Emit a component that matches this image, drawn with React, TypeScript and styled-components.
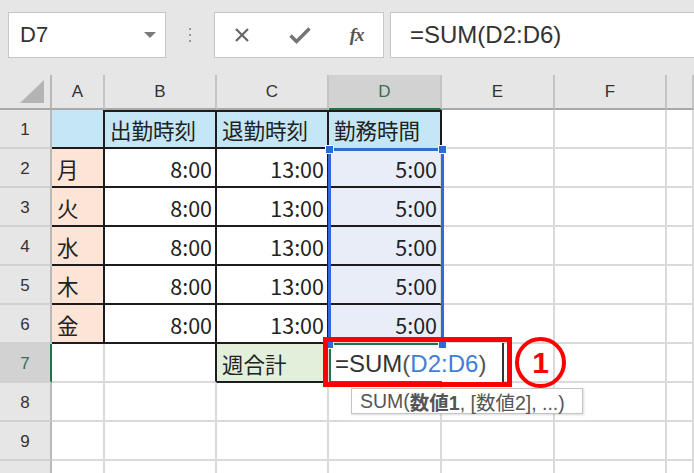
import React from "react";
import styled, { createGlobalStyle } from "styled-components";

const Global = createGlobalStyle`
  html, body { margin: 0; padding: 0; background: #e6e6e6; }
  body { width: 694px; height: 473px; overflow: hidden; font-family: "Liberation Sans", "Noto Sans CJK JP", sans-serif; }
  * { box-sizing: border-box; }
`;

const GRID = "#dadada";
const BLACK = "#1c1c1c";
const GREEN = "#217346";
const BLUE = "#2f6bd6";
const RED = "#ff0000";

const Page = styled.div`
  width: 694px;
  height: 473px;
  overflow: hidden;
  display: flex;
  flex-direction: column;
  background: #e6e6e6;
`;

const Toolbar = styled.div`
  height: 75px;
  flex: none;
  display: flex;
  align-items: flex-start;
  padding: 12px 0 0 8px;
`;

const Box = styled.div`
  height: 46px;
  background: #ffffff;
  border: 1.5px solid #c6c6c6;
  display: flex;
  align-items: center;
`;

const NameBox = styled(Box)`
  width: 158px;
  justify-content: space-between;
  padding: 0 9px 0 11px;
  font-size: 22px;
  color: #333;
`;

const Grip = styled.div`
  width: 48px;
  height: 46px;
  display: flex;
  flex-direction: column;
  align-items: center;
  justify-content: center;
  gap: 4px;
`;

const GripDot = styled.span`
  width: 2px;
  height: 2px;
  background: #9a9a9a;
`;

const ButtonsBox = styled(Box)`
  width: 170px;
  justify-content: space-around;
`;

const FxLabel = styled.span`
  font-family: "Liberation Serif", serif;
  font-style: italic;
  font-weight: bold;
  font-size: 19px;
  color: #555;
  letter-spacing: -1px;
`;

const FormulaInput = styled(Box)`
  flex: 1;
  margin-left: 6px;
  margin-right: -6px;
  padding-left: 19px;
  font-size: 24px;
  color: #333;
`;

const SheetWrap = styled.div`
  position: relative;
  flex: 1;
  overflow: hidden;
`;

const Sheet = styled.div`
  display: grid;
  grid-template-columns: 52px 53px 112px 112px 113px 113px 112px 1fr;
  grid-template-rows: 35px repeat(10, 39px);
  background: #ffffff;
`;

const Corner = styled.div`
  background: #e6e6e6;
  border-right: 2px solid #b8b8b8;
  border-bottom: 2px solid #a8a8a8;
  display: flex;
  align-items: flex-end;
  justify-content: flex-end;
  padding: 0 6px 5px 0;
`;

const ColHeader = styled.div<{ $active?: boolean }>`
  background: ${(p) => (p.$active ? "#d2d2d2" : "#e6e6e6")};
  border-right: 2px solid #c4c4c4;
  border-bottom: 2px solid ${(p) => (p.$active ? GREEN : "#a8a8a8")};
  color: ${(p) => (p.$active ? "#3a6e58" : "#333")};
  font-size: 17px;
  display: flex;
  align-items: center;
  justify-content: center;
  padding-top: 1px;
`;

const RowHeader = styled.div<{ $active?: boolean }>`
  background: ${(p) => (p.$active ? "#d2d2d2" : "#e6e6e6")};
  border-right: 2px solid ${(p) => (p.$active ? GREEN : "#b8b8b8")};
  border-bottom: 2px solid #d0d0d0;
  color: ${(p) => (p.$active ? "#3a6e58" : "#333")};
  font-size: 17px;
  display: flex;
  align-items: center;
  justify-content: center;
  padding-top: 2px;
`;

type CellProps = {
  $fill?: string;
  $align?: "left" | "right";
  $r?: boolean;
  $b?: boolean;
  $t?: boolean;
};

const Cell = styled.div<CellProps>`
  background: ${(p) => p.$fill || "#ffffff"};
  border-right: 2px solid ${(p) => (p.$r ? BLACK : GRID)};
  border-bottom: 2px solid ${(p) => (p.$b ? BLACK : GRID)};
  box-shadow: ${(p) => (p.$t ? `inset 0 2px 0 ${BLACK}` : "none")};
  font-family: "Noto Sans CJK JP", sans-serif;
  font-size: 21.5px;
  line-height: 1;
  color: #222;
  display: flex;
  align-items: center;
  justify-content: ${(p) => (p.$align === "right" ? "flex-end" : "flex-start")};
  padding: 3px 3px 0 5px;
  white-space: nowrap;
`;

const RangeBox = styled.div`
  position: absolute;
  left: 328px;
  top: 73px;
  width: 116px;
  height: 198px;
  border: 3px solid ${BLUE};
`;

const Handle = styled.div<{ $x: number; $y: number }>`
  position: absolute;
  left: ${(p) => p.$x - 4}px;
  top: ${(p) => p.$y - 4}px;
  width: 9px;
  height: 9px;
  background: ${BLUE};
  border: 1px solid #ffffff;
`;

const EditBox = styled.div`
  position: absolute;
  left: 329px;
  top: 268px;
  width: 175px;
  height: 40px;
  background: #ffffff;
  border-right: 2px solid #333;
  display: flex;
  align-items: center;
  padding: 2px 0 0 6px;
  font-size: 24px;
  color: #333;
  white-space: nowrap;
`;

const EditFrame = styled.div`
  position: absolute;
  left: 0;
  top: 0;
  width: 113px;
  height: 40px;
  border: 2px solid ${GREEN};
  border-right: none;
`;

const RefText = styled.span`
  color: #3f7fd8;
`;

const ParenText = styled.span`
  color: #555;
`;

const RedBox = styled.div`
  position: absolute;
  left: 323px;
  top: 262px;
  width: 189px;
  height: 50px;
  border: 5px solid ${RED};
`;

const NumberMark = styled.div`
  position: absolute;
  left: 515px;
  top: 262px;
  width: 51px;
  height: 51px;
  border: 4px solid ${RED};
  border-radius: 50%;
  display: flex;
  align-items: center;
  justify-content: center;
  color: ${RED};
  font-size: 30px;
  font-weight: bold;
  font-family: "Liberation Sans", sans-serif;
  padding-top: 1px;
`;

const Tooltip = styled.div`
  position: absolute;
  left: 351px;
  top: 313px;
  width: 232px;
  height: 26px;
  background: #ffffff;
  border: 1px solid #c4c4c4;
  box-shadow: 1px 1px 2px rgba(0, 0, 0, 0.15);
  display: flex;
  align-items: center;
  padding-left: 8px;
  font-size: 19.5px;
  color: #555;
  white-space: nowrap;
  font-family: "Liberation Sans", "Noto Sans CJK JP", sans-serif;
`;

const Strong = styled.b`
  font-weight: bold;
`;

const cols = ["A", "B", "C", "D", "E", "F", ""];
const days = ["月", "火", "水", "木", "金"];

export default function App() {
  const rows: React.ReactNode[] = [];

  rows.push(
    <RowHeader key="h1">1</RowHeader>,
    <Cell key="a1" $fill="#c4e6f5" $r $b />,
    <Cell key="b1" $fill="#c4e6f5" $r $b $t>出勤時刻</Cell>,
    <Cell key="c1" $fill="#c4e6f5" $r $b $t>退勤時刻</Cell>,
    <Cell key="d1" $fill="#c4e6f5" $r $t>勤務時間</Cell>,
    <Cell key="e1" />,
    <Cell key="f1" />,
    <Cell key="g1" />
  );

  days.forEach((d, i) => {
    const n = i + 2;
    rows.push(
      <RowHeader key={`h${n}`}>{n}</RowHeader>,
      <Cell key={`a${n}`} $fill="#fce4d6" $r $b>{d}</Cell>,
      <Cell key={`b${n}`} $align="right" $r $b>8:00</Cell>,
      <Cell key={`c${n}`} $align="right" $r $b>13:00</Cell>,
      <Cell key={`d${n}`} $fill="#e9edf7" $align="right" $b={n < 6}>5:00</Cell>,
      <Cell key={`e${n}`} />,
      <Cell key={`f${n}`} />,
      <Cell key={`g${n}`} />
    );
  });

  rows.push(
    <RowHeader key="h7" $active>7</RowHeader>,
    <Cell key="a7" />,
    <Cell key="b7" $r />,
    <Cell key="c7" $fill="#e2efda" $b>週合計</Cell>,
    <Cell key="d7" />,
    <Cell key="e7" />,
    <Cell key="f7" />,
    <Cell key="g7" />
  );

  [8, 9, 10].forEach((n) => {
    rows.push(<RowHeader key={`h${n}`}>{n < 10 ? n : ""}</RowHeader>);
    for (let c = 0; c < 7; c++) rows.push(<Cell key={`r${n}c${c}`} />);
  });

  return (
    <>
      <Global />
      <Page>
        <Toolbar>
          <NameBox>
            <span>D7</span>
            <svg width="12" height="7" viewBox="0 0 12 7">
              <path d="M0 0 L12 0 L6 6 Z" fill="#7a7a7a" />
            </svg>
          </NameBox>
          <Grip>
            <GripDot />
            <GripDot />
            <GripDot />
          </Grip>
          <ButtonsBox>
            <svg width="16" height="16" viewBox="0 0 16 16">
              <path d="M2 2 L14 14 M14 2 L2 14" stroke="#666" strokeWidth="2.2" />
            </svg>
            <svg width="22" height="17" viewBox="0 0 22 17">
              <path d="M1.5 8.5 L7.5 14.5 L20.5 1.5" stroke="#747474" strokeWidth="3.4" fill="none" />
            </svg>
            <FxLabel>fx</FxLabel>
          </ButtonsBox>
          <FormulaInput>=SUM(D2:D6)</FormulaInput>
        </Toolbar>
        <SheetWrap>
          <Sheet>
            <Corner>
              <svg width="24" height="23" viewBox="0 0 24 23">
                <path d="M24 0 L24 23 L0 23 Z" fill="#b4b4b4" />
              </svg>
            </Corner>
            {cols.map((c) => (
              <ColHeader key={`col${c}`} $active={c === "D"}>{c}</ColHeader>
            ))}
            {rows}
          </Sheet>
          <RangeBox />
          <EditBox>
            <EditFrame />
            =SUM<ParenText>(</ParenText><RefText>D2:D6</RefText><ParenText>)</ParenText>
          </EditBox>
          <Handle $x={329} $y={74} />
          <Handle $x={442} $y={74} />
          <Handle $x={329} $y={269} />
          <Handle $x={442} $y={269} />
          <RedBox />
          <NumberMark>1</NumberMark>
          <Tooltip>
            SUM(<Strong>数値1</Strong>, [数値2], ...)
          </Tooltip>
        </SheetWrap>
      </Page>
    </>
  );
}
